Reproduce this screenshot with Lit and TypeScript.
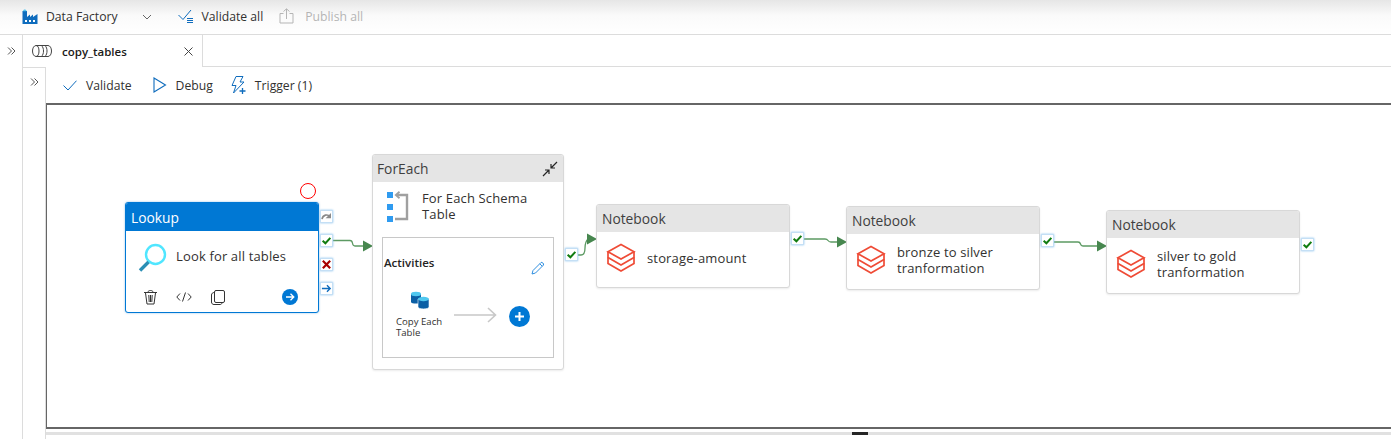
import { LitElement, html, css, svg } from "lit";
import { customElement } from "lit/decorators.js";

const layers = svg`<svg class="nb-icon" viewBox="0 0 30 30" fill="none" stroke="#ef4b36" stroke-width="1.700" stroke-linejoin="miter">
  <path d="M15 1.500 L28 8.800 L15 16 L2 8.800 Z" />
  <path d="M2 8.800 V14.500 L15 22 L28 14.500 V8.800" />
  <path d="M2 14.500 V20.500 L15 28 L28 20.500 V14.500" />
</svg>`;

const check = svg`<svg viewBox="0 0 12 12" width="11" height="11"><path d="M1.800 6.200 L4.800 9 L10.200 3.200" fill="none" stroke="#107c10" stroke-width="2.200"/></svg>`;

const notebooks = [
  { x: 549, y: 99, title: "storage-amount", two: false },
  { x: 799, y: 101, title: "bronze to silver tranformation", two: true },
  { x: 1059, y: 105, title: "silver to gold tranformation", two: true },
];

@customElement("app-root")
export class AppRoot extends LitElement {
  static styles = css`
    :host {
      display: block;
      width: 1391px;
      height: 439px;
      overflow: hidden;
      background: #fff;
      font-family: "Open Sans", "Noto Sans", sans-serif;
      font-size: 12.2px;
      color: #323130;
    }
    .topbar {
      box-sizing: content-box;
      border-bottom: 1px solid #dcdcdc;
      background: linear-gradient(#e6e6e6, #fafafa 45%, #fff);
      display: flex;
      align-items: center;
      padding: 0 0 2px 22px;
      height: 32px;
    }
    .topbar .item { display: flex; align-items: center; gap: 8px; }
    .chev { margin: 2px 0 0 24px; }
    .validate-all { margin-left: 26px; gap: 8px !important; }
    .publish { margin-left: 16px; color: #b5b5b5; gap: 11px !important; }
    .shell { display: flex; height: 404px; }
    .rail {
      width: 23px;
      flex: none;
      height: 404px;
      border-right: 1px solid #dcdcdc;
      display: flex;
      justify-content: center;
      padding-top: 12px;
      box-sizing: border-box;
    }
    .right { flex: 1; min-width: 0; }
    .tabrow { display: flex; height: 32px; }
    .tab {
      width: 180px;
      flex: none;
      border-right: 1px solid #dcdcdc;
      display: flex;
      align-items: center;
      padding-left: 9px;
      box-sizing: border-box;
      gap: 10px;
      font-weight: 600;
      font-size: 11.5px;
      color: #1b1a19;
      height: 32px;
    }
    .tab .close { margin-left: auto; margin-right: 9px; }
    .tab-fill { height: 32px; border-bottom: 1px solid #dcdcdc; box-sizing: border-box; flex: 1; }
    .body { display: flex; }
    .inner-rail {
      width: 23px;
      flex: none;
      height: 372px;
      border-right: 1px solid #dcdcdc;
      border-top: 1px solid #dcdcdc;
      box-sizing: border-box;
      display: flex;
      justify-content: center;
      padding-top: 10px;
    }
    .work { flex: 1; min-width: 0; }
    .toolbar {
      height: 36px;
      box-sizing: border-box;
      display: flex;
      align-items: center;
      padding-left: 17px;
      gap: 21px;
    }
    .toolbar .tool { display: flex; align-items: center; gap: 9px; }
    .toolbar .tool.trigger { gap: 8px; margin-left: -3px; }
    .canvas {
      position: relative;
      height: 326px;
      box-sizing: border-box;
      border: solid #666;
      border-width: 2px 0 2px 1px;
    }
    .strip {
      position: relative;
      height: 3px;
      margin-top: 3px;
      background: #e1e1e1;
    }
    .strip i {
      position: absolute;
      left: 806px;
      top: 0;
      width: 16px;
      height: 3px;
      background: #252525;
    }
    .wires { position: absolute; left: 0; top: 0; pointer-events: none; }
    .node {
      position: absolute;
      box-sizing: border-box;
      width: 194px;
      border: 1px solid #d8d8d8;
      border-radius: 3px;
      background: #fff;
      box-shadow: 0 1px 2px rgba(0, 0, 0, 0.08);
    }
    .head {
      height: 27px;
      background: #e5e5e5;
      display: flex;
      align-items: center;
      justify-content: space-between;
      padding: 0 5px;
      font-size: 13.8px;
      color: #3f3f3f;
      border-radius: 2px 2px 0 0;
    }
    .foreach .head { padding-left: 4px; }
    .node.lookup { border: 1px solid #0078d4; box-shadow: 0 0 2px rgba(0, 120, 212, 0.5); }
    .lookup .head { background: #0078d4; color: #fff; height: 28px; }
    .row { display: flex; align-items: center; }
    .nb-row { height: 55px; padding: 0 0 4px 9px; gap: 11px; box-sizing: border-box; }
    .nb-icon { width: 30px; height: 30px; flex: none; }
    .label { font-size: 13px; letter-spacing: 0.15px; line-height: 16px; color: #323130; }
    .lk-row { height: 53px; padding-left: 11px; gap: 9px; }
    .lk-row .label { margin-bottom: 3px; }
    .lk-actions { display: flex; align-items: center; padding: 0 20px 0 17px; gap: 18px; height: 26px; }
    .lk-actions .copy { margin-left: 1px; }
    .lk-actions .go { margin-left: auto; }
    .fe-row { height: 55px; padding: 9px 0 0 14px; gap: 13px; align-items: flex-start; box-sizing: border-box; }
    .fe-row .label { margin-top: -1px; }
    .inner {
      box-sizing: border-box;
      position: relative;
      height: 121px;
      margin: 0 9px;
      border: 1px solid #c8c8c8;
      padding: 17px 1px 0;
    }
    .inner .title { font-weight: 600; font-size: 11.5px; line-height: 16px; color: #252423; }
    .inner .pen { position: absolute; right: 8px; top: 23px; }
    .activity {
      position: absolute;
      left: 13px;
      top: 53px;
      width: 50px;
      font-size: 9.6px;
      line-height: 11px;
    }
    .activity svg { display: block; margin: 0 0 7px 15px; }
    .add-arrow { position: absolute; left: 71px; top: 69px; }
    .plus { position: absolute; left: 126px; top: 68px; }
    .side {
      position: absolute;
      width: 13px;
      height: 13px;
      box-sizing: border-box;
      border: 1px solid #c4dff5;
      box-shadow: 0 0 2px #8cc4ee;
      background: #fff;
      display: flex;
      align-items: center;
      justify-content: center;
    }
    .ring {
      position: absolute;
      left: 253px;
      top: 78px;
      width: 16px;
      height: 16px;
      box-sizing: border-box;
      border: 1px solid #f00;
      border-radius: 50%;
    }
  `;

  private side(x: number, y: number, icon: unknown) {
    return html`<div class="side" style="left:${x}px;top:${y}px">${icon}</div>`;
  }

  private wire(d: string, ax: number, ay: number) {
    return svg`<path d=${d} fill="none" stroke="#5c9a63" stroke-width="1.300" />
      <path d="M${ax} ${ay - 5.5} L${ax + 10} ${ay} L${ax} ${ay + 5.5} Z" fill="#47874f" />`;
  }

  private notebook(n: (typeof notebooks)[number]) {
    return html`<div class="node" style="left:${n.x}px;top:${n.y}px">
        <div class="head">Notebook</div>
        <div class="row nb-row">${layers}<div class="label" style="width:${n.two ? 125 : 140}px">${n.title}</div></div>
      </div>
      ${this.side(n.x + 195, n.y + 28, check)}`;
  }

  render() {
    const chevrons = svg`<svg width="9" height="8" viewBox="0 0 9 8" fill="none" stroke="#555" stroke-width="1"><path d="M1 0.500 L4.500 4 L1 7.500 M4.500 0.500 L8 4 L4.500 7.500" /></svg>`;
    return html`
      <div class="topbar">
        <div class="item">
          <svg width="16" height="16" viewBox="0 0 16 16">
            <path d="M0.500 16 V3 H5 V9 L8 6.500 V9 L11 6.500 V9 L15.500 6 V16 Z" fill="#0f6cbd" />
            <path d="M1 3.200 C1 1 4.500 1 4.500 3.200 Z" fill="#55c5ee" />
            <path d="M3 12 h2 v2 h-2z M7 12 h2 v2 h-2z M11 12 h2 v2 h-2z" fill="#fff" />
          </svg>
          <span>Data Factory</span>
        </div>
        <svg class="chev" width="10" height="6" viewBox="0 0 10 6"><path d="M1 1 L5 5 L9 1" fill="none" stroke="#666" stroke-width="1" /></svg>
        <div class="item validate-all">
          <svg width="16" height="14" viewBox="0 0 16 14" fill="none" stroke="#0f6cbd" stroke-width="1">
            <path d="M0.500 6 L5 10.500 L13 1" />
            <path d="M9 9.500 H15 M9 11.500 H15 M9 13.500 H15" />
          </svg>
          <span>Validate all</span>
        </div>
        <div class="item publish">
          <svg width="15" height="16" viewBox="0 0 15 16" fill="none" stroke="#b5b5b5" stroke-width="1">
            <path d="M4.500 5.500 H1 V15 H14 V5.500 H10.500" />
            <path d="M7.500 11 V1 M4.500 3.500 L7.500 0.800 L10.500 3.500" />
          </svg>
          <span>Publish all</span>
        </div>
      </div>
      <div class="shell">
        <div class="rail">${chevrons}</div>
        <div class="right">
          <div class="tabrow">
            <div class="tab">
              <svg width="20" height="12" viewBox="0 0 20 12" fill="none" stroke="#444" stroke-width="1">
                <path d="M4 0.500 H16 C18 0.500 19.500 3 19.500 6 C19.500 9 18 11.500 16 11.500 H4 C2 11.500 0.500 9 0.500 6 C0.500 3 2 0.500 4 0.500 Z" />
                <path d="M4 0.500 C6 0.500 7 3 7 6 C7 9 6 11.500 4 11.500 M9.500 0.500 C11 2 11.500 4 11.500 6 C11.500 8 11 10 9.500 11.500 M13 0.500 C14.500 2 15 4 15 6 C15 8 14.500 10 13 11.500" />
              </svg>
              <span>copy_tables</span>
              <svg class="close" width="9" height="9" viewBox="0 0 9 9" fill="none" stroke="#444" stroke-width="1"><path d="M0.500 0.500 L8.500 8.500 M8.500 0.500 L0.500 8.500" /></svg>
            </div>
            <div class="tab-fill"></div>
          </div>
          <div class="body">
            <div class="inner-rail">${chevrons}</div>
            <div class="work">
              <div class="toolbar">
                <div class="tool">
                  <svg width="14" height="11" viewBox="0 0 14 11" fill="none" stroke="#0f6cbd" stroke-width="1"><path d="M0.500 5.500 L5 10 L13.500 0.700" /></svg>
                  <span>Validate</span>
                </div>
                <div class="tool">
                  <svg width="14" height="16" viewBox="0 0 14 16" fill="none" stroke="#0f6cbd" stroke-width="1.100"><path d="M1 1 L12.500 8 L1 15 Z" /></svg>
                  <span>Debug</span>
                </div>
                <div class="tool trigger">
                  <svg width="16" height="18" viewBox="0 0 16 18" fill="none" stroke="#0f6cbd" stroke-width="1">
                    <path d="M5 0.500 H12 L9 6 H13 L2.500 17 L5 9.500 H1 Z" />
                    <path d="M11.500 12 V18 M8.500 15 H14.500" stroke-width="1.300" />
                  </svg>
                  <span>Trigger (1)</span>
                </div>
              </div>
              <div class="canvas">
                <svg class="wires" width="1345" height="322">
                  ${this.wire("M286 135.500 H303 C307 135.500 304 141 308 141 H317", 316, 141)}
                  ${this.wire("M531 150 H534 C538 150 538 146 538 143 C538 139 539 136 541 134", 540, 134)}
                  ${this.wire("M756 134 H778 C782 134 780 137 784 137 H791", 790, 137)}
                  ${this.wire("M1006 137 H1031 C1035 137 1032 141 1036 141 H1051", 1050, 141)}
                </svg>

                <div class="ring"></div>
                <div class="node lookup" style="left:78px;top:97px;height:111px">
                  <div class="head">Lookup</div>
                  <div class="row lk-row">
                    <svg width="30" height="32" viewBox="0 0 30 32" fill="none">
                      <circle cx="18.500" cy="12.500" r="9.500" stroke="#50e6ff" stroke-width="2.400" />
                      <path d="M11.500 20 L3 28.500" stroke="#2a8fb5" stroke-width="3.400" />
                    </svg>
                    <div class="label">Look for all tables</div>
                  </div>
                  <div class="lk-actions">
                    <svg width="15" height="16" viewBox="0 0 15 16" fill="none" stroke="#333" stroke-width="1">
                      <path d="M1 3.500 H14 M5 3 C5 1 10 1 10 3 M2.500 4 L4 15 H11 L12.500 4 M5.800 6 L6.200 13 M9.200 6 L8.800 13 M7.500 6 V13" />
                    </svg>
                    <svg width="16" height="10" viewBox="0 0 16 10" fill="none" stroke="#333" stroke-width="1">
                      <path d="M4 1.500 L0.800 5 L4 8.500 M12 1.500 L15.200 5 L12 8.500 M9.500 0.500 L6.500 9.500" />
                    </svg>
                    <svg class="copy" width="14" height="15" viewBox="0 0 14 15" fill="none" stroke="#333" stroke-width="1">
                      <rect x="3.500" y="0.500" width="10" height="12" rx="1.500" />
                      <path d="M3.500 2.500 C1.500 2.500 0.500 3.500 0.500 5 V12 C0.500 13.500 1.500 14.500 3 14.500 H9 C10 14.500 11 14 11 12.500" />
                    </svg>
                    <svg class="go" width="16" height="16" viewBox="0 0 16 16">
                      <circle cx="8" cy="8" r="8" fill="#0078d4" />
                      <path d="M4 8 H11.500 M8.500 4.800 L11.800 8 L8.500 11.200" fill="none" stroke="#fff" stroke-width="1.300" />
                    </svg>
                  </div>
                </div>
                ${this.side(273, 105, svg`<svg viewBox="0 0 12 10" width="11" height="9"><path d="M1 8 C2 3 7 2 10 5" fill="none" stroke="#8a8a8a" stroke-width="1.800" /><path d="M11 1 V7 H5 Z" fill="#8a8a8a" /></svg>`)}
                ${this.side(273, 129, check)}
                ${this.side(273, 153, svg`<svg viewBox="0 0 12 12" width="11" height="11"><path d="M2 2 L10 10 M10 2 L2 10" stroke="#a80000" stroke-width="2.400" /></svg>`)}
                ${this.side(273, 177, svg`<svg viewBox="0 0 12 12" width="11" height="11"><path d="M1 6 H10 M6.500 2.500 L10 6 L6.500 9.500" fill="none" stroke="#0f6cbd" stroke-width="1.500" /></svg>`)}

                <div class="node foreach" style="left:325px;top:49px;width:192px;height:216px">
                  <div class="head">
                    <span>ForEach</span>
                    <svg width="16" height="16" viewBox="0 0 16 16" fill="none" stroke="#252525" stroke-width="1.200">
                      <path d="M9 7 L15 1 M9 3 V7 H13 M7 9 L1 15 M3 9 H7 V13" />
                    </svg>
                  </div>
                  <div class="row fe-row">
                    <svg width="22" height="32" viewBox="0 0 22 32">
                      <path d="M0 1 h6 v6 h-6z M0 13 h6 v6 h-6z M0 25 h6 v6 h-6z" fill="#2f9bf0" />
                      <path d="M10 4 H20 V28 H8" fill="none" stroke="#a0a0a0" stroke-width="2.400" />
                      <path d="M12.500 0.800 L8.800 4 L12.500 7.200" fill="none" stroke="#a0a0a0" stroke-width="1.800" />
                    </svg>
                    <div class="label">For Each Schema<br />Table</div>
                  </div>
                  <div class="inner">
                    <div class="title">Activities</div>
                    <svg class="pen" width="14" height="14" viewBox="0 0 14 14" fill="none" stroke="#2f8fe0" stroke-width="1">
                      <path d="M1 13 L2 9.500 L10 1.500 C11 0.700 13.200 2.800 12.500 4 L4.500 12 Z M8.800 2.800 L11.200 5.200" />
                    </svg>
                    <div class="activity">
                      <svg width="18" height="18" viewBox="0 0 18 18">
                        <path d="M0 3 V11 C0 13 10 13 10 11 V3 Z" fill="#0b5fa5" />
                        <ellipse cx="5" cy="3" rx="5" ry="2.200" fill="#50c8ef" />
                        <path d="M7 8 V16 C7 18.500 18 18.500 18 16 V8 Z" fill="#0b5fa5" stroke="#fff" stroke-width="0.600" />
                        <ellipse cx="12.500" cy="8" rx="5.500" ry="2.200" fill="#50c8ef" />
                      </svg>
                      Copy Each Table
                    </div>
                    <svg class="add-arrow" width="44" height="16" viewBox="0 0 44 16" fill="none" stroke="#c8c8c8" stroke-width="1.600">
                      <path d="M0 8 H41 M34 1 L41.500 8 L34 15" />
                    </svg>
                    <svg class="plus" width="21" height="21" viewBox="0 0 21 21">
                      <circle cx="10.500" cy="10.500" r="10.500" fill="#0078d4" />
                      <path d="M10.500 6 V15 M6 10.500 H15" stroke="#fff" stroke-width="2" />
                    </svg>
                  </div>
                </div>
                ${this.side(518, 143, check)}

                ${notebooks.map((n) => this.notebook(n))}
              </div>
              <div class="strip"><i></i></div>
            </div>
          </div>
        </div>
      </div>
    `;
  }
}
